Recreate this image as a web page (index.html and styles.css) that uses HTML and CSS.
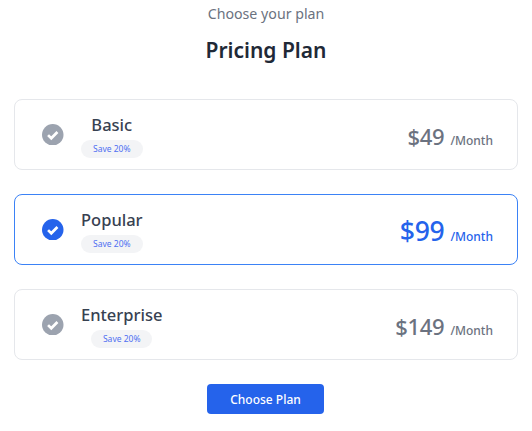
FILE: index.html
```html
<!DOCTYPE html>
<html lang="en">
<head>
    <meta charset="utf-8">
    <title>Pricing Plan</title>
    <link rel="stylesheet" href="styles.css">
</head>
<body>
    <section class="pricing">
        <p class="pricing-subtitle">Choose your plan</p>
        <h2 class="pricing-title">Pricing Plan</h2>

        <div class="plan-list">
            <div class="plan-card">
                <svg class="plan-check" viewBox="0 0 22 22"><circle cx="11" cy="11" r="11"/><path d="M6.2 11.4l3.3 3.2 6.3-6.4"/></svg>
                <div class="plan-info">
                    <h3 class="plan-name">Basic</h3>
                    <span class="plan-badge">Save 20%</span>
                </div>
                <div class="plan-price">
                    <span class="plan-amount">$49</span>
                    <span class="plan-period">/Month</span>
                </div>
            </div>

            <div class="plan-card active">
                <svg class="plan-check" viewBox="0 0 22 22"><circle cx="11" cy="11" r="11"/><path d="M6.2 11.4l3.3 3.2 6.3-6.4"/></svg>
                <div class="plan-info">
                    <h3 class="plan-name">Popular</h3>
                    <span class="plan-badge">Save 20%</span>
                </div>
                <div class="plan-price">
                    <span class="plan-amount">$99</span>
                    <span class="plan-period">/Month</span>
                </div>
            </div>

            <div class="plan-card">
                <svg class="plan-check" viewBox="0 0 22 22"><circle cx="11" cy="11" r="11"/><path d="M6.2 11.4l3.3 3.2 6.3-6.4"/></svg>
                <div class="plan-info">
                    <h3 class="plan-name">Enterprise</h3>
                    <span class="plan-badge">Save 20%</span>
                </div>
                <div class="plan-price">
                    <span class="plan-amount">$149</span>
                    <span class="plan-period">/Month</span>
                </div>
            </div>
        </div>

        <button class="choose-btn">Choose Plan</button>
    </section>
</body>
</html>
```

FILE: styles.css
```css
* {
    box-sizing: border-box;
}

body {
    margin: 0;
    background: #fff;
    font-family: "Noto Sans", "Open Sans", sans-serif;
}

.pricing {
    display: flex;
    flex-direction: column;
    align-items: center;
    padding: 4px 14px 0;
}

.pricing-subtitle {
    margin: 0;
    font-size: 14.2px;
    line-height: 20px;
    color: #6b7280;
}

.pricing-title {
    margin: 12px 0 0;
    font-size: 21px;
    line-height: 28px;
    font-weight: 600;
    color: #1f2937;
}

.plan-list {
    width: 100%;
    margin-top: 35px;
    display: flex;
    flex-direction: column;
    gap: 24px;
}

.plan-card {
    height: 71px;
    padding: 0 24px 0 27px;
    display: flex;
    align-items: center;
    border: 1px solid #e5e7eb;
    border-radius: 8px;
}

.plan-card.active {
    border-color: #3b82f6;
}

.plan-check {
    width: 21.5px;
    height: 21.5px;
    flex-shrink: 0;
    fill: #9ca3af;
}

.plan-check path {
    fill: none;
    stroke: #fff;
    stroke-width: 2.8;
}

.plan-card.active .plan-check {
    fill: #2563eb;
}

.plan-info {
    margin: 1px 0 0 17.5px;
    display: flex;
    flex-direction: column;
    align-items: center;
    gap: 3px;
}

.plan-name {
    margin: 0;
    font-size: 16.5px;
    line-height: 24px;
    font-weight: 500;
    color: #374151;
}

.plan-badge {
    width: 61.5px;
    height: 18px;
    border-radius: 9px;
    background: #f3f4f6;
    font-size: 8.5px;
    line-height: 18px;
    text-align: center;
    color: #4f6ef2;
}

.plan-price {
    margin: 2px 0 0 auto;
    display: flex;
    align-items: baseline;
    gap: 6px;
}

.plan-amount {
    font-size: 22px;
    line-height: 30px;
    letter-spacing: -0.3px;
    font-weight: 500;
    color: #6b7280;
}

.plan-period {
    font-size: 12px;
    font-weight: 500;
    color: #6b7280;
}

.plan-card.active .plan-amount {
    font-size: 26.5px;
    color: #2563eb;
}

.plan-card.active .plan-period {
    color: #2563eb;
}

.choose-btn {
    margin: 24px 1px 0 0;
    width: 117px;
    height: 30px;
    border: none;
    border-radius: 4px;
    background: #2563eb;
    color: #fff;
    font-family: inherit;
    font-size: 12px;
    font-weight: 500;
    cursor: pointer;
}
```
